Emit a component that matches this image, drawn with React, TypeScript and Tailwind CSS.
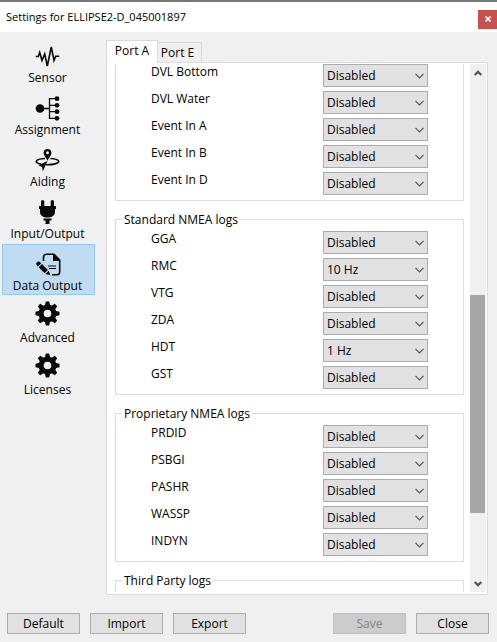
import { useState } from "react";
import type { ReactNode } from "react";

type Log = { name: string; rate: string };

const inputLogs: Log[] = [
  { name: "DVL Bottom", rate: "Disabled" },
  { name: "DVL Water", rate: "Disabled" },
  { name: "Event In A", rate: "Disabled" },
  { name: "Event In B", rate: "Disabled" },
  { name: "Event In D", rate: "Disabled" },
];
const standardLogs: Log[] = [
  { name: "GGA", rate: "Disabled" },
  { name: "RMC", rate: "10 Hz" },
  { name: "VTG", rate: "Disabled" },
  { name: "ZDA", rate: "Disabled" },
  { name: "HDT", rate: "1 Hz" },
  { name: "GST", rate: "Disabled" },
];
const proprietaryLogs: Log[] = [
  { name: "PRDID", rate: "Disabled" },
  { name: "PSBGI", rate: "Disabled" },
  { name: "PASHR", rate: "Disabled" },
  { name: "WASSP", rate: "Disabled" },
  { name: "INDYN", rate: "Disabled" },
];

function Icon({ children }: { children: ReactNode }) {
  return (
    <svg viewBox="0 0 24 28" className="mr-0.5 h-7 w-6 shrink-0 overflow-visible" fill="#0a0a0a" aria-hidden="true">
      {children}
    </svg>
  );
}

const sensorIcon = (
  <Icon>
    <path
      d="M.7 15.5H3.3L4.7 11.5L7 19.5L9.7 13L12.3 25L16.3 6L19 19.5L20.7 15.3H24.3"
      fill="none"
      stroke="#0a0a0a"
      strokeWidth="1.6"
    />
  </Icon>
);

const assignmentIcon = (
  <Icon>
    <circle cx="5" cy="15.5" r="4.3" />
    <path d="M5 15.5H14.5M22 5.7H14.5V25.3H22M14.5 12.3H22M14.5 18.7H22" fill="none" stroke="#0a0a0a" strokeWidth="1.3" />
    <circle cx="22" cy="5.7" r="2.4" />
    <circle cx="22" cy="12.3" r="2.4" />
    <circle cx="22" cy="18.7" r="2.4" />
    <circle cx="22" cy="25.3" r="2.4" />
  </Icon>
);

const aidingIcon = (
  <Icon>
    <path
      d="M10 13.5C4.5 13.8 1.3 15 1.3 16.5C1.3 17.8 3 18.6 6 19.1M11 19.7C18.5 19.9 23.7 18.4 23.7 16.5C23.7 15 20.5 13.8 15.5 13.5"
      fill="none"
      stroke="#0a0a0a"
      strokeWidth="1.6"
    />
    <path
      fillRule="evenodd"
      d="M12.5 4A3.9 3.9 0 0 1 16.4 7.9C16.4 10.5 13.6 12.5 12.5 16C11.4 12.5 8.6 10.5 8.6 7.9A3.9 3.9 0 0 1 12.5 4ZM12.5 6.2A1.5 1.5 0 1 0 12.5 9.2A1.5 1.5 0 1 0 12.5 6.2Z"
    />
    <path d="M12.5 16L3.5 20.3L7 22L7.8 26.5Z" />
  </Icon>
);

const plugIcon = (
  <Icon>
    <rect x="6" y="3" width="3.3" height="8" rx="1.6" />
    <rect x="15.7" y="3" width="3.3" height="8" rx="1.6" />
    <path d="M4 9H21V12H20V15C20 18.5 17 20.5 12.5 20.5S5 18.5 5 15V12H4Z" />
    <path d="M8.5 21.5H16.5V23.5H14.5V27H10.5V23.5H8.5Z" />
  </Icon>
);

const documentIcon = (
  <Icon>
    <path
      d="M8.5 12V8.5C8.5 6.5 9.5 5.3 11.5 5.3H19L24.7 11V23C24.7 25 24 25.7 22 25.7H17"
      fill="none"
      stroke="#0a0a0a"
      strokeWidth="1.6"
    />
    <path d="M18 5.5H19.5L24.7 10.7V12H18Z" />
    <path d="M13 17H21M14 19.5H21" stroke="#0a0a0a" strokeWidth="1.2" />
    <path d="M1.2 15.2Q1 14 2 13.3L3.2 12.6Q4.2 12.2 5 13L6.2 14.2L2.9 17.5Z" />
    <path d="M3.7 18.3L7 15L12.9 20.9L9.6 24.2Z" />
    <path d="M10.4 25L13.7 21.7L15.4 26.3Z" />
  </Icon>
);

const gearIcon = (
  <Icon>
    <circle cx="12.5" cy="12.5" r="6.4" fill="none" stroke="#0a0a0a" strokeWidth="5.2" />
    {[0, 45, 90, 135, 180, 225, 270, 315].map((angle) => (
      <path key={angle} d="M9.8 5L10.8 .5H14.2L15.2 5Z" transform={`rotate(${angle} 12.5 12.5)`} />
    ))}
  </Icon>
);

const sections = [
  { name: "Sensor", icon: sensorIcon },
  { name: "Assignment", icon: assignmentIcon },
  { name: "Aiding", icon: aidingIcon },
  { name: "Input/Output", icon: plugIcon },
  { name: "Data Output", icon: documentIcon },
  { name: "Advanced", icon: gearIcon },
  { name: "Licenses", icon: gearIcon },
];

function LogRow({ name, rate }: Log) {
  const [value, setValue] = useState(rate);
  const id = "log-" + name.toLowerCase().replace(/ /g, "-");
  return (
    <div className="flex items-start pr-[35px]">
      <label htmlFor={id} className="flex-1 leading-4">
        {name}
      </label>
      <div className="relative h-[23px] w-[105px]">
        <select
          id={id}
          value={value}
          onChange={(e) => setValue(e.target.value)}
          className="block h-full w-full appearance-none border border-[#adadad] bg-[#e1e1e1] pr-5 pl-[3px] leading-4"
        >
          <option>Disabled</option>
          <option>1 Hz</option>
          <option>10 Hz</option>
        </select>
        <svg viewBox="0 0 9 6" className="pointer-events-none absolute top-[9px] right-1 h-1.5 w-[9px]" aria-hidden="true">
          <path d="M.5 .8L4.5 4.8L8.5 .8" fill="none" stroke="#555" strokeWidth="1.2" />
        </svg>
      </div>
    </div>
  );
}

function LogGroup({ title, logs }: { title: string; logs: Log[] }) {
  return (
    <fieldset className="mt-2.5 min-w-0 border border-[#dcdcdc] px-1.5 pb-[5px]">
      <legend className="h-[17px] px-0.5 leading-[17px]">{title}</legend>
      <div className="-mr-1.5 flex flex-col gap-1 pt-[3px] pl-[29px]">
        {logs.map((log) => (
          <LogRow key={log.name} {...log} />
        ))}
      </div>
    </fieldset>
  );
}

function DialogButton({ label, disabled }: { label: string; disabled?: boolean }) {
  return (
    <button
      type="button"
      disabled={disabled}
      className="h-[21px] w-[73px] border border-[#adadad] bg-[#e1e1e1] leading-4 disabled:border-[#bfbfbf] disabled:bg-[#cccccc] disabled:text-[#838383]"
    >
      {label}
    </button>
  );
}

function ArrowButton({ label, d }: { label: string; d: string }) {
  return (
    <button type="button" aria-label={label} className="flex h-[17px] w-full shrink-0 items-center justify-center pr-px">
      <svg viewBox="0 0 8 6" className="h-1.5 w-2" aria-hidden="true">
        <path d={d} fill="none" stroke="#505050" strokeWidth="2.2" />
      </svg>
    </button>
  );
}

export default function App() {
  const [section, setSection] = useState("Data Output");
  return (
    <div className="flex h-screen flex-col bg-[#f0f0f0] font-['Open_Sans','Noto_Sans',sans-serif] text-[12px] text-black">
      <header className="flex h-8 shrink-0 items-center justify-between border-t-2 border-[#777777] bg-white pl-1.5">
        <h1 className="text-[11px] leading-4">Settings for ELLIPSE2-D_045001897</h1>
        <button
          type="button"
          aria-label="Close window"
          className="mt-1 flex h-[19px] w-[19px] items-center justify-center bg-[#c75050] text-white"
        >
          <svg viewBox="0 0 6 6" className="h-1.5 w-1.5" aria-hidden="true">
            <path d="M.5 .5L5.5 5.5M5.5 .5L.5 5.5" stroke="white" strokeWidth="1.6" />
          </svg>
        </button>
      </header>

      <main className="flex min-h-0 flex-1 pr-[9px]">
        <nav aria-label="Settings sections" className="flex w-[95px] shrink-0 flex-col gap-px pt-1 pl-0.5">
          {sections.map(({ name, icon }) => (
            <button
              key={name}
              type="button"
              onClick={() => setSection(name)}
              className={
                "flex h-[51px] flex-col items-center gap-px border pt-1 pr-0.5 " +
                (section === name ? "border-[#90c8f6] bg-[#c0dcf3]" : "border-transparent")
              }
            >
              {icon}
              <span className="leading-4 whitespace-nowrap">{name}</span>
            </button>
          ))}
        </nav>

        <div className="ml-[11px] flex min-w-0 flex-1 flex-col pt-2">
          <div role="tablist" className="flex items-end">
            <button
              type="button"
              role="tab"
              aria-selected="true"
              className="relative -mb-px h-[23px] w-[52px] border border-b-0 border-[#d9d9d9] bg-white pb-0.5 leading-4"
            >
              Port A
            </button>
            <button
              type="button"
              role="tab"
              aria-selected="false"
              className="h-5 w-11 border border-b-0 border-l-0 border-[#d9d9d9] bg-[#f0f0f0] pr-1 leading-4"
            >
              Port E
            </button>
          </div>

          <div role="tabpanel" className="flex min-h-0 flex-1 border border-[#dcdcdc] bg-white pt-px pr-px pb-0.5">
            <div className="min-w-0 flex-1 overflow-hidden pr-1.5 pl-2">
              <div className="flex flex-col gap-1 border border-t-0 border-[#dcdcdc] pb-[5px] pl-[35px]">
                {inputLogs.map((log) => (
                  <LogRow key={log.name} {...log} />
                ))}
              </div>
              <LogGroup title="Standard NMEA logs" logs={standardLogs} />
              <LogGroup title="Proprietary NMEA logs" logs={proprietaryLogs} />
              <LogGroup title="Third Party logs" logs={[]} />
            </div>
            <div className="flex w-4 shrink-0 flex-col bg-[#f0f0f0]">
              <ArrowButton label="Scroll up" d="M.7 5L4 1.7L7.3 5" />
              <div className="grow-[214]" />
              <div className="w-[15px] grow-[218] bg-[#a6a6a6]" />
              <div className="grow-[62]" />
              <ArrowButton label="Scroll down" d="M.7 1L4 4.3L7.3 1" />
            </div>
          </div>
        </div>
      </main>

      <footer className="flex shrink-0 gap-2.5 pt-[18px] pr-2 pb-2 pl-[7px]">
        <DialogButton label="Default" />
        <DialogButton label="Import" />
        <DialogButton label="Export" />
        <div className="flex-1" />
        <DialogButton label="Save" disabled />
        <DialogButton label="Close" />
      </footer>
    </div>
  );
}
